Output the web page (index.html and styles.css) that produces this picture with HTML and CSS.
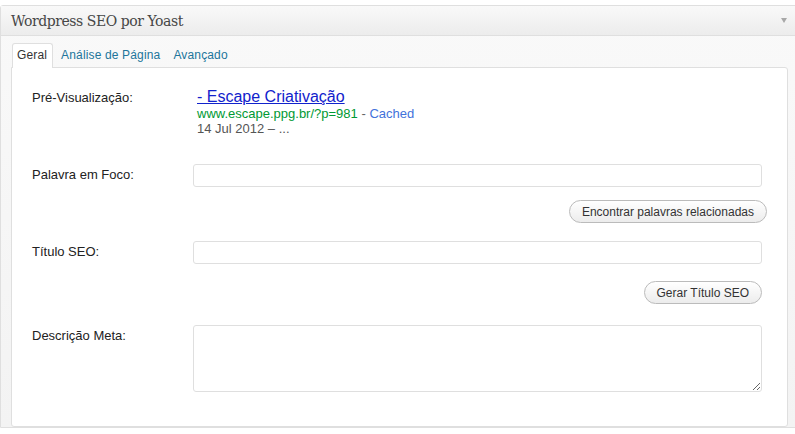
FILE: index.html
```html
<!DOCTYPE html>
<html lang="pt">
<head>
<meta charset="utf-8">
<title>Wordpress SEO por Yoast</title>
<link rel="stylesheet" href="styles.css">
</head>
<body>
<div class="postbox">
  <div class="handle">
    <h3 class="title">Wordpress SEO por Yoast</h3>
    <span class="toggle"></span>
  </div>
  <div class="inside">
    <ul class="tabs">
      <li class="tab active">Geral</li>
      <li class="tab"><a href="#">Análise de Página</a></li>
      <li class="tab"><a href="#">Avançado</a></li>
    </ul>
    <div class="panel">
      <div class="row row-preview">
        <div class="label">Pré-Visualização:</div>
        <div class="snippet">
          <a class="snip-title" href="#">- Escape Criativação</a>
          <div class="snip-url"><span class="url">www.escape.ppg.br/?p=981</span> - <span class="cached">Cached</span></div>
          <div class="snip-date">14 Jul 2012 – ...</div>
        </div>
      </div>
      <div class="row row-focus">
        <div class="label">Palavra em Foco:</div>
        <input class="field" type="text">
      </div>
      <div class="btn-row btn-row-1">
        <button class="btn btn-wide">Encontrar palavras relacionadas</button>
      </div>
      <div class="row row-title">
        <div class="label">Título SEO:</div>
        <input class="field" type="text">
      </div>
      <div class="btn-row btn-row-2">
        <button class="btn">Gerar Título SEO</button>
      </div>
      <div class="row row-desc">
        <div class="label">Descrição Meta:</div>
        <textarea class="field area"></textarea>
      </div>
    </div>
  </div>
</div>
</body>
</html>
```

FILE: styles.css
```css
html, body {
  margin: 0;
  padding: 0;
  background: #ffffff;
}

body {
  font-family: "Liberation Sans", Arial, sans-serif;
  color: #333333;
  overflow: hidden;
}

.postbox {
  margin-top: 5px;
  width: 820px;
  border: 1px solid #dfdfdf;
  border-radius: 3px 0 0 0;
  background: linear-gradient(#f9f9f9, #f3f3f3);
}

.handle {
  height: 29px;
  display: flex;
  align-items: center;
  justify-content: space-between;
  background: linear-gradient(#f9f9f9, #ececec);
  border-bottom: 1px solid #dfdfdf;
  padding: 0 0 0 10px;
}

.title {
  margin: 0;
  font-family: "DejaVu Serif", Georgia, serif;
  font-weight: normal;
  font-size: 14px;
  color: #464646;
  letter-spacing: -0.45px;
}

.toggle {
  width: 0;
  height: 0;
  margin-right: 34px;
  border-left: 3.5px solid transparent;
  border-right: 3.5px solid transparent;
  border-top: 5px solid #a8a8a8;
}

.inside {
  padding: 7px 0 0 10px;
}

.tabs {
  list-style: none;
  margin: 0 0 0 1px;
  padding: 0;
  display: flex;
  gap: 3px;
  position: relative;
  z-index: 1;
}

.tab {
  font-size: 12px;
  letter-spacing: 0.15px;
  line-height: 22px;
  padding: 1px 5px 0;
  height: 24px;
  box-sizing: border-box;
  margin-bottom: -1px;
}

.tab.active {
  background: #ffffff;
  border: 1px solid #dfdfdf;
  border-bottom: 0;
  border-radius: 3px 3px 0 0;
  padding: 0 5px 0 4px;
  height: 25px;
  color: #333333;
}

.tab a {
  color: #21759b;
  text-decoration: none;
}

.panel {
  width: 777px;
  background: #ffffff;
  border: 1px solid #dfdfdf;
  border-radius: 0 3px 3px 3px;
  padding: 20px 0 34px 20px;
  box-sizing: border-box;
}

.row {
  display: flex;
  align-items: flex-start;
}

.label {
  width: 161px;
  flex: none;
  font-size: 13px;
  line-height: 15px;
  padding-top: 3px;
  color: #222222;
}

.row-preview {
  align-items: baseline;
}

.row-preview .label {
  padding-top: 0;
}

.snippet {
  padding-left: 4px;
  font-size: 13px;
  line-height: 15px;
}

.snip-title {
  display: block;
  font-size: 16px;
  line-height: 18px;
  color: #1122cc;
  text-decoration: underline;
}

.url {
  color: #009933;
}

.snip-url {
  color: #666666;
}

.cached {
  color: #4272db;
}

.snip-date {
  color: #555555;
}

.row-focus {
  margin-top: 28px;
}

.field {
  width: 569px;
  height: 23px;
  box-sizing: border-box;
  border: 1px solid #dfdfdf;
  border-radius: 3px;
  background: #ffffff;
  margin: 0;
  font-family: "Liberation Sans", Arial, sans-serif;
  font-size: 13px;
}

.area {
  height: 67px;
  resize: both;
}

.btn-row {
  display: flex;
  justify-content: flex-end;
  width: 730px;
}

.btn-row-1 {
  margin-top: 13px;
  width: 735px;
}

.btn-row-2 {
  margin-top: 17px;
}

.row-title {
  margin-top: 18px;
}

.row-desc {
  margin-top: 21px;
}

.btn {
  font-family: "Liberation Sans", Arial, sans-serif;
  font-size: 12px;
  color: #333333;
  height: 23px;
  padding: 0 12px;
  border: 1px solid #bbbbbb;
  border-radius: 12px;
  background: linear-gradient(#ffffff, #ececec);
  margin: 0;
}
```
